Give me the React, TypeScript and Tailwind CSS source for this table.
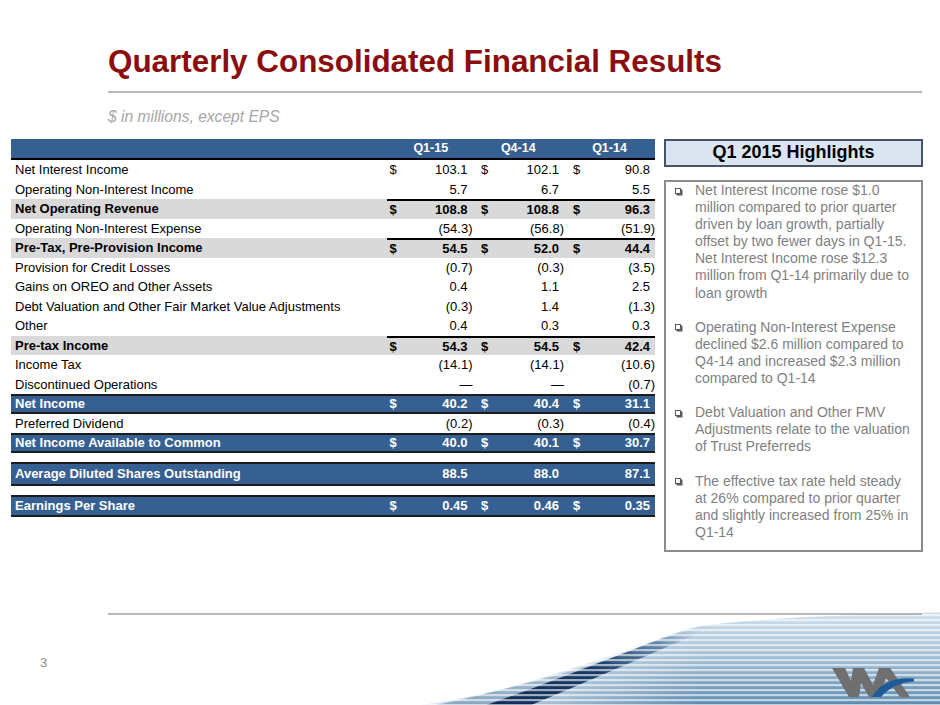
import React from 'react';

type R = { l: string; v: [string, string, string]; d?: boolean; k?: 'g' | 'b' };

const data: R[] = [
  { l: 'Net Interest Income', v: ['103.1', '102.1', '90.8'], d: true },
  { l: 'Operating Non-Interest Income', v: ['5.7', '6.7', '5.5'] },
  { l: 'Net Operating Revenue', v: ['108.8', '108.8', '96.3'], d: true, k: 'g' },
  { l: 'Operating Non-Interest Expense', v: ['(54.3)', '(56.8)', '(51.9)'] },
  { l: 'Pre-Tax, Pre-Provision Income', v: ['54.5', '52.0', '44.4'], d: true, k: 'g' },
  { l: 'Provision for Credit Losses', v: ['(0.7)', '(0.3)', '(3.5)'] },
  { l: 'Gains on OREO and Other Assets', v: ['0.4', '1.1', '2.5'] },
  { l: 'Debt Valuation and Other Fair Market Value Adjustments', v: ['(0.3)', '1.4', '(1.3)'] },
  { l: 'Other', v: ['0.4', '0.3', '0.3'] },
  { l: 'Pre-tax Income', v: ['54.3', '54.5', '42.4'], d: true, k: 'g' },
  { l: 'Income Tax', v: ['(14.1)', '(14.1)', '(10.6)'] },
  { l: 'Discontinued Operations', v: ['\u2014', '\u2014', '(0.7)'] },
  { l: 'Net Income', v: ['40.2', '40.4', '31.1'], d: true, k: 'b' },
  { l: 'Preferred Dividend', v: ['(0.2)', '(0.3)', '(0.4)'] },
  { l: 'Net Income Available to Common', v: ['40.0', '40.1', '30.7'], d: true, k: 'b' },
];

const colCls = ['w-[85.5px] pl-[2.5px]', 'w-[91.5px] pl-[8.5px]', 'w-[91px] pl-[9px]'];

function Cells({ v, d }: { v: [string, string, string]; d?: boolean }) {
  return (
    <>
      {v.map((x, i) => {
        const hang = x.endsWith(')') || x === '\u2014';
        return (
          <div key={i} className={`${colCls[i]} flex items-center justify-between`}>
            <span>{d ? '$' : ''}</span>
            <span className={hang ? '' : 'pr-[5px]'}>{x}</span>
          </div>
        );
      })}
    </>
  );
}

function Row({ r, h = 'h-[19.5px]' }: { r: R; h?: string }) {
  if (r.k === 'b') {
    return (
      <div className={`flex ${h} bg-[#376092] border-y-2 border-[#1c1c1c] text-white font-bold`}>
        <div className="w-[376px] pl-[4px] flex items-center">{r.l}</div>
        <div className="flex">
          <Cells v={r.v} d={r.d} />
        </div>
      </div>
    );
  }
  if (r.k === 'g') {
    return (
      <div className={`flex ${h} bg-[#d9d9d9] font-bold text-black`}>
        <div className="w-[376px] pl-[4px] flex items-center">{r.l}</div>
        <div className="flex border-t-2 border-black">
          <Cells v={r.v} d={r.d} />
        </div>
      </div>
    );
  }
  return (
    <div className={`flex ${h} text-black`}>
      <div className="w-[376px] pl-[4px] flex items-center">{r.l}</div>
      <div className="flex">
        <Cells v={r.v} d={r.d} />
      </div>
    </div>
  );
}

const bullets: string[][] = [
  [
    'Net Interest Income rose $1.0',
    'million compared to prior quarter',
    'driven by loan growth, partially',
    'offset by two fewer days in Q1-15.',
    'Net Interest Income rose $12.3',
    'million from Q1-14 primarily due to',
    'loan growth',
  ],
  [
    'Operating Non-Interest Expense',
    'declined $2.6 million compared to',
    'Q4-14 and increased $2.3 million',
    'compared to Q1-14',
  ],
  ['Debt Valuation and Other FMV', 'Adjustments relate to the valuation', 'of Trust Preferreds'],
  [
    'The effective tax rate held steady',
    'at 26% compared to prior quarter',
    'and slightly increased from 25% in',
    'Q1-14',
  ],
];

function Decoration() {
  const stripes = Array.from({ length: 19 }, (_, i) => 614 + i * 5);
  return (
    <svg
      className="absolute left-0 top-0 pointer-events-none"
      width={940}
      height={705}
      viewBox="0 0 940 705"
    >
      <defs>
        <linearGradient id="fadeX" gradientUnits="userSpaceOnUse" x1="380" y1="0" x2="700" y2="0">
          <stop offset="0" stopColor="#fff" stopOpacity="0" />
          <stop offset="0.5" stopColor="#fff" stopOpacity="0.55" />
          <stop offset="1" stopColor="#fff" stopOpacity="1" />
        </linearGradient>
        <mask id="region" maskUnits="userSpaceOnUse" x="0" y="560" width="940" height="145">
          <path
            d="M 360 712 C 520 698 620 654 700 626 C 770 617 850 615 950 612 L 950 712 Z"
            fill="url(#fadeX)"
          />
        </mask>
        <linearGradient id="washY" gradientUnits="userSpaceOnUse" x1="0" y1="612" x2="0" y2="705">
          <stop offset="0" stopColor="#d2e1ec" />
          <stop offset="0.55" stopColor="#9bb9d0" />
          <stop offset="1" stopColor="#5f8bb0" />
        </linearGradient>
        <linearGradient id="swoosh" gradientUnits="userSpaceOnUse" x1="490" y1="705" x2="700" y2="627">
          <stop offset="0" stopColor="#102c55" stopOpacity="1" />
          <stop offset="0.5" stopColor="#173a68" stopOpacity="1" />
          <stop offset="0.8" stopColor="#3c6792" stopOpacity="0.7" />
          <stop offset="1" stopColor="#7fa2c0" stopOpacity="0" />
        </linearGradient>
        <linearGradient id="glow" gradientUnits="userSpaceOnUse" x1="470" y1="705" x2="690" y2="627">
          <stop offset="0" stopColor="#4f7aa3" stopOpacity="0.55" />
          <stop offset="1" stopColor="#9bb9d0" stopOpacity="0" />
        </linearGradient>
      </defs>
      <rect x="300" y="600" width="640" height="105" fill="url(#washY)" mask="url(#region)" />
      <path
        d="M 420 708 C 520 690 610 656 690 627 L 700 627 C 620 660 540 692 490 708 Z"
        fill="url(#glow)"
      />
      <path
        d="M 478 708 C 550 683 625 652 692 627 L 714 627 C 645 656 580 685 524 708 Z"
        fill="url(#swoosh)"
      />
      {stripes.map((y) => (
        <rect key={y} x="300" y={y} width="640" height="2.2" fill="#ffffff" opacity="0.6" />
      ))}
      <polygon
        points="832,668 845,668 851,681 853,668 864,668 873,685 879,668 890,668 910,697 900,697 886,678 879,697 869,697 861,683 859,697 849,697"
        fill="#6f6f6f"
      />
      <path d="M 872 697 Q 884 676 914 678.5 L 914 681.5 Q 893 683 881 697 Z" fill="#1f5b99" />
    </svg>
  );
}

export default function App() {
  return (
    <div
      className="relative w-[940px] h-[705px] overflow-hidden bg-white"
      style={{ fontFamily: '"Liberation Sans", Arial, sans-serif' }}
    >
      <Decoration />
      <div className="relative flex flex-col">
        <div className="pt-[46px] pl-[108px]">
          <h1 className="text-[31.4px] leading-[31px] font-bold text-[#8b0e0e] whitespace-nowrap">
            Quarterly Consolidated Financial Results
          </h1>
        </div>
        <div className="mt-[14px] ml-[108px] w-[814px] h-[2px] bg-[#b7b7b7]" />
        <div className="mt-[14.5px] ml-[108px] text-[15.6px] leading-[18px] italic text-[#a6a6a6]">
          $ in millions, except EPS
        </div>

        <div className="mt-[13.5px] flex items-start pl-[11px] gap-[9px]">
          <div className="w-[644px] text-[13px]">
            <div className="flex h-[21px] bg-[#376092] border-b-2 border-black text-white font-bold text-[12.5px]">
              <div className="w-[376px]" />
              <div className="w-[85.5px] flex items-center justify-center pl-[2px]">Q1-15</div>
              <div className="w-[91.5px] flex items-center justify-center">Q4-14</div>
              <div className="w-[91px] flex items-center justify-center">Q1-14</div>
            </div>
            {data.map((r) => (
              <Row key={r.l} r={r} />
            ))}
            <div className="h-[9px]" />
            <Row r={{ l: 'Average Diluted Shares Outstanding', v: ['88.5', '88.0', '87.1'], k: 'b' }} h="h-[24px]" />
            <div className="h-[9px]" />
            <Row r={{ l: 'Earnings Per Share', v: ['0.45', '0.46', '0.35'], d: true, k: 'b' }} h="h-[22px]" />
          </div>

          <div className="w-[259px]">
            <div className="h-[27.5px] border-2 border-[#44546a] bg-[#dbe5f1] flex items-center justify-center text-[18px] font-bold text-black">
              Q1 2015 Highlights
            </div>
            <div className="mt-[13.5px] h-[372px] border-2 border-[#8c8c8c] text-[14px] leading-[17.1px] text-[#7f7f7f] flex flex-col gap-[17.1px]">
              {bullets.map((p, i) => (
                <div key={i} className="flex">
                  <div className="w-[29px] pl-[9px] h-[17.1px] flex items-center">
                    <span className="block w-[6px] h-[6px] border border-[#5a5a5a] shadow-[1.5px_1.5px_0_#5a5a5a]" />
                  </div>
                  <div>
                    {p.map((line) => (
                      <div key={line} className="whitespace-nowrap">
                        {line}
                      </div>
                    ))}
                  </div>
                </div>
              ))}
            </div>
          </div>
        </div>

        <div className="mt-[61px] ml-[108px] w-[814px] h-[2px] bg-[#b7b7b7]" />
        <div className="mt-[40px] pl-[40px] text-[13px] leading-[16px] text-[#8c8c8c]">3</div>
      </div>
    </div>
  );
}
